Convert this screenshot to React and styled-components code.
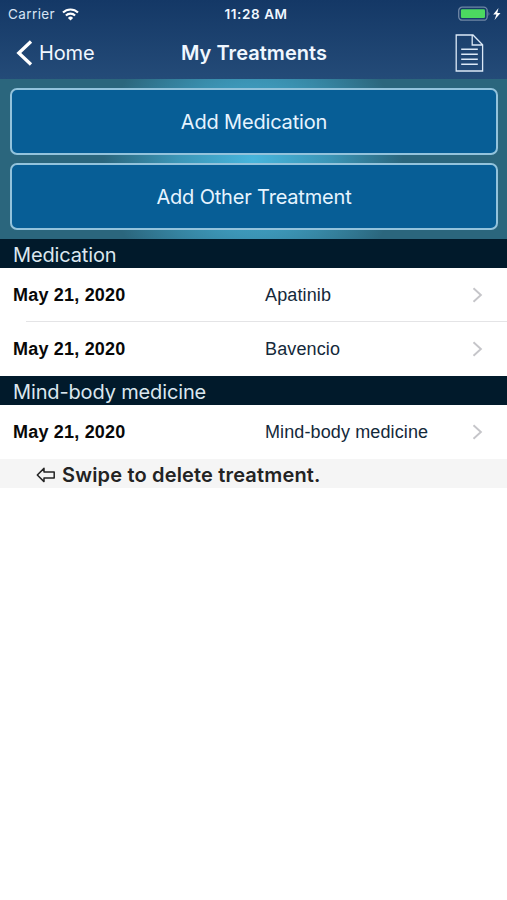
import React from "react";
import styled, { createGlobalStyle } from "styled-components";

const GlobalStyle = createGlobalStyle`
  body {
    margin: 0;
    background: #fff;
    font-family: Inter, "Liberation Sans", sans-serif;
  }

  * {
    box-sizing: border-box;
  }
`;

const Screen = styled.div`
  width: 507px;
  height: 900px;
  background: #fff;
  overflow: hidden;
`;

const Header = styled.header`
  height: 79px;
  background: linear-gradient(#143866, #244b78);
  color: #f0f7ff;
`;

const StatusBar = styled.div`
  display: grid;
  grid-template-columns: 1fr auto 1fr;
  align-items: center;
  height: 28px;
  padding: 0 5px 0 8px;
  font-size: 13.5px;
`;

const Carrier = styled.div`
  display: flex;
  align-items: center;
  gap: 7px;
  letter-spacing: 0.4px;
  color: #d6e4f4;
`;

const Clock = styled.div`
  font-weight: 600;
  letter-spacing: 0.6px;
  padding-left: 2px;
`;

const Battery = styled.div`
  display: flex;
  justify-content: flex-end;
  align-items: center;
`;

const NavBar = styled.nav`
  display: grid;
  grid-template-columns: 1fr auto 1fr;
  align-items: center;
  height: 49px;
  padding: 0 23px 0 16px;
`;

const BackButton = styled.div`
  display: flex;
  align-items: center;
  gap: 6px;
  font-size: 20px;
  letter-spacing: -0.15px;
`;

const Title = styled.div`
  font-size: 20px;
  font-weight: 600;
  letter-spacing: 0.05px;
  padding-left: 8px;
`;

const NotesButton = styled.div`
  display: flex;
  justify-content: flex-end;
`;

const Actions = styled.div`
  display: flex;
  flex-direction: column;
  gap: 8px;
  height: 160px;
  padding: 9px 9px 9px 10px;
  background: radial-gradient(
    circle 150px at 253px 80px,
    #47b5dc 0%,
    #3c96b7 50%,
    #2b667d 100%
  );
`;

const ActionButton = styled.div`
  display: flex;
  flex: 1;
  align-items: center;
  justify-content: center;
  border: 2px solid #93c3dc;
  border-radius: 7px;
  background: #075e96;
  color: #e6f4ff;
  font-size: 20px;
  letter-spacing: -0.18px;
`;

const SectionTitle = styled.div`
  display: flex;
  align-items: center;
  height: 29px;
  padding: 2px 13px 0;
  background: #011a2b;
  color: #dbe7ef;
  font-size: 20px;
  letter-spacing: -0.14px;
`;

const Row = styled.div`
  display: flex;
  align-items: center;
  position: relative;
  height: 54px;
  padding: 0 24px 0 13px;
  font-family: "Liberation Sans", Arial, sans-serif;
  font-size: 18px;

  & + &::before {
    content: "";
    position: absolute;
    top: -1px;
    left: 26px;
    right: 0;
    height: 1px;
    background: #e4e4e6;
  }
`;

const RowDate = styled.div`
  width: 252px;
  font-weight: 700;
  letter-spacing: 0.2px;
  color: #080808;
`;

const RowName = styled.div`
  flex: 1;
  letter-spacing: 0.12px;
  color: #14293a;
`;

const Hint = styled.div`
  display: flex;
  align-items: center;
  gap: 6px;
  height: 29px;
  padding: 2px 0 0 36px;
  background: #f5f5f5;
  color: #232323;
  font-size: 20px;
  font-weight: 600;
  letter-spacing: 0.17px;
`;

const sections = [
  {
    title: "Medication",
    rows: [
      { date: "May 21, 2020", name: "Apatinib" },
      { date: "May 21, 2020", name: "Bavencio" }
    ]
  },
  {
    title: "Mind-body medicine",
    rows: [{ date: "May 21, 2020", name: "Mind-body medicine" }]
  }
];

const WifiIcon = () => (
  <svg width="17" height="13" viewBox="0 0 17 13" fill="none" stroke="#fff" strokeWidth="2.1">
    <path d="M1 4.6a10.6 10.6 0 0 1 15 0" />
    <path d="M3.9 7.5a6.5 6.5 0 0 1 9.2 0" />
    <path d="M8.5 12.5 5.9 9.9a3.7 3.7 0 0 1 5.2 0z" fill="#fff" stroke="none" />
  </svg>
);

const BatteryIcon = () => (
  <svg width="45" height="16" viewBox="0 0 45 16">
    <rect x="1.7" y="1.2" width="28.5" height="13" rx="3.5" fill="none" stroke="#6f87a5" strokeWidth="1.3" />
    <rect x="3.9" y="3.3" width="24.1" height="8.8" rx="1.3" fill="#4cda60" />
    <path d="M31.5 5.3q1.8 2.4 0 4.8z" fill="#6f87a5" />
    <path d="M41.5 2 36.2 8.4h3.2L37.5 14l6-6.9h-3.2z" fill="#fff" />
  </svg>
);

const BackIcon = () => (
  <svg width="17" height="26" viewBox="0 0 17 26" fill="none" stroke="#fff" strokeWidth="3.3">
    <path d="M15 1.5 2.8 13 15 24.5" />
  </svg>
);

const NotesIcon = () => (
  <svg width="29" height="38" viewBox="0 0 29 38" fill="none" stroke="#dce9f7" strokeWidth="1.3">
    <path d="M1.2 1H18L27.6 10.7V37H1.2zM17.2 1v10h10.4" />
    <path d="M6.2 15.2h16.6M6.2 20.2h16.6M6.2 25.2h16.6M6.2 30.2h16.6" strokeWidth="1.5" />
  </svg>
);

const DisclosureIcon = () => (
  <svg width="11" height="16" viewBox="0 0 11 16" fill="none" stroke="#c5c5c9" strokeWidth="1.9">
    <path d="M1.5 1.2 8.9 8l-7.4 6.8" />
  </svg>
);

const SwipeIcon = () => (
  <svg width="20" height="16" viewBox="0 0 20 16" fill="none" stroke="#232323" strokeWidth="1.5">
    <path d="M1.3 8 8 1.4v3.7h10.2v5.8H8v3.7z" strokeLinejoin="round" />
  </svg>
);

export const App = () => {
  return (
    <Screen>
      <GlobalStyle />
      <Header>
        <StatusBar>
          <Carrier>
            <span>Carrier</span>
            <WifiIcon />
          </Carrier>
          <Clock>11:28 AM</Clock>
          <Battery>
            <BatteryIcon />
          </Battery>
        </StatusBar>
        <NavBar>
          <BackButton>
            <BackIcon />
            <span>Home</span>
          </BackButton>
          <Title>My Treatments</Title>
          <NotesButton>
            <NotesIcon />
          </NotesButton>
        </NavBar>
      </Header>
      <Actions>
        <ActionButton>Add Medication</ActionButton>
        <ActionButton>Add Other Treatment</ActionButton>
      </Actions>
      {sections.map(({ title, rows }) => (
        <div key={title}>
          <SectionTitle>{title}</SectionTitle>
          {rows.map(({ date, name }) => (
            <Row key={name}>
              <RowDate>{date}</RowDate>
              <RowName>{name}</RowName>
              <DisclosureIcon />
            </Row>
          ))}
        </div>
      ))}
      <Hint>
        <SwipeIcon />
        <span>Swipe to delete treatment.</span>
      </Hint>
    </Screen>
  );
};

export default App;
